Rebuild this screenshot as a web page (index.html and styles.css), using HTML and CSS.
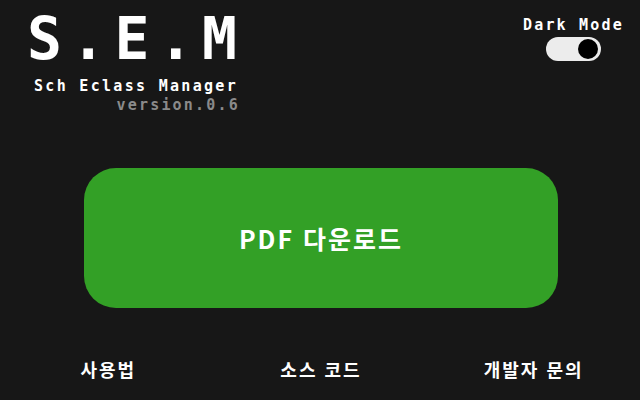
FILE: index.html
```html
<!DOCTYPE html>
<html lang="ko">
<head>
<meta charset="utf-8">
<link rel="stylesheet" href="styles.css">
</head>
<body>
<div class="app">
  <header class="header">
    <div class="brand">
      <div class="title">S.E.M</div>
      <div class="subtitle">Sch Eclass Manager</div>
      <div class="version">version.0.6</div>
    </div>
    <div class="mode">
      <div class="mode-label">Dark Mode</div>
      <div class="toggle"><span class="knob"></span></div>
    </div>
  </header>
  <main class="main">
    <button class="pdf-btn">PDF 다운로드</button>
  </main>
  <nav class="links">
    <a class="link">사용법</a>
    <a class="link">소스 코드</a>
    <a class="link">개발자 문의</a>
  </nav>
</div>
</body>
</html>
```
FILE: styles.css
```css
html, body {
  margin: 0;
  padding: 0;
  background: #171717;
}
body {
  width: 640px;
  height: 400px;
  overflow: hidden;
  color: #ffffff;
  font-family: "DejaVu Sans Mono", monospace;
}
.app {
  display: flex;
  flex-direction: column;
  height: 400px;
}
.header {
  display: flex;
  justify-content: space-between;
  align-items: flex-start;
  padding: 0 16px 0 27px;
}
.brand {
  display: flex;
  flex-direction: column;
  align-items: flex-end;
  width: 213px;
}
.title {
  align-self: flex-start;
  font-size: 58px;
  line-height: 1;
  font-weight: bold;
  letter-spacing: 8.8px;
  margin-top: 10px;
}
.subtitle {
  font-size: 15px;
  font-weight: bold;
  letter-spacing: 2.3px;
  line-height: 18px;
  margin-top: 9px;
  margin-right: 2px;
}
.version {
  font-size: 15px;
  font-weight: bold;
  letter-spacing: 2.2px;
  line-height: 18px;
  color: #8a8a8a;
  margin-top: 1px;
  margin-right: 0;
}
.mode {
  display: flex;
  flex-direction: column;
  align-items: center;
  margin-top: 16px;
}
.mode-label {
  font-size: 15px;
  font-weight: bold;
  letter-spacing: 2.2px;
  line-height: 18px;
}
.toggle {
  margin-top: 3px;
  width: 55px;
  height: 24px;
  border-radius: 12px;
  background: #ececec;
  display: flex;
  align-items: center;
  justify-content: flex-end;
  padding: 0 3px;
  box-sizing: border-box;
}
.knob {
  width: 20px;
  height: 20px;
  border-radius: 50%;
  background: #000;
}
.main {
  display: flex;
  justify-content: center;
  padding-top: 54px;
  padding-left: 2px;
}
.pdf-btn {
  width: 474px;
  height: 140px;
  border: none;
  border-radius: 32px;
  background: #33a026;
  color: #ffffff;
  font-family: "Noto Sans CJK KR", sans-serif;
  font-weight: bold;
  font-size: 25px;
  letter-spacing: 2px;
}
.links {
  display: grid;
  grid-template-columns: repeat(3, 1fr);
  margin-top: 49px;
  padding-left: 2px;
}
.link {
  text-align: center;
  font-family: "Noto Sans CJK KR", sans-serif;
  font-weight: bold;
  font-size: 18px;
  letter-spacing: 2px;
  line-height: 24px;
  color: #ffffff;
}
```
